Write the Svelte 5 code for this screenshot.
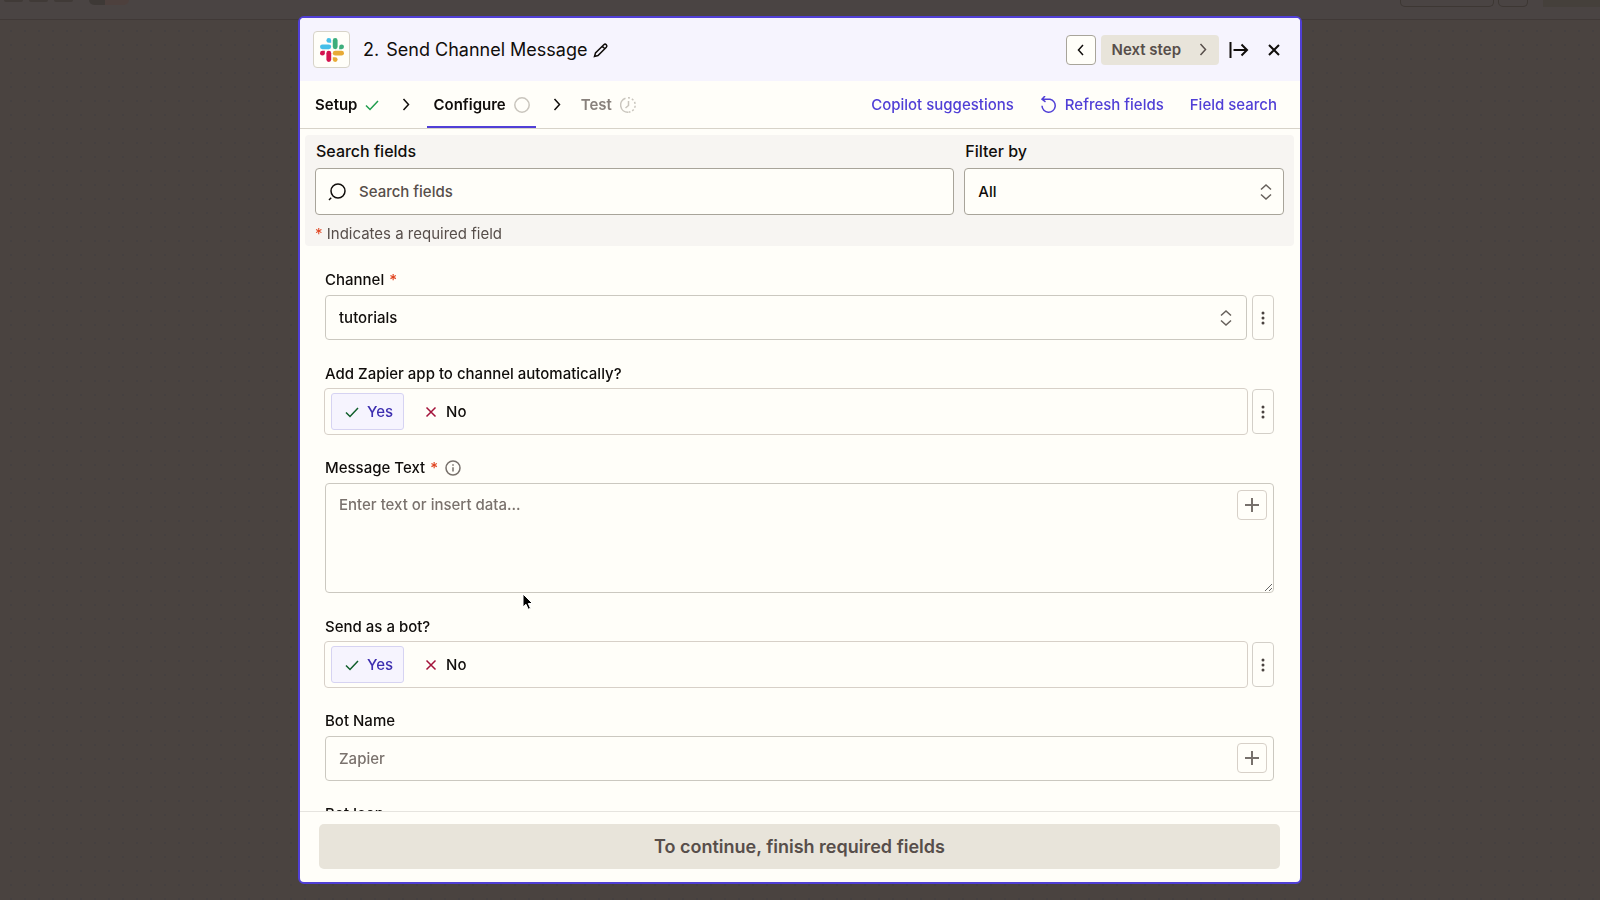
<script lang="ts">
	/**
	 * Step editor dialog: configure a Slack "Send Channel Message" action.
	 */

	let search = $state('');
	let filter = $state('All');
	let channel = $state('tutorials');
	let addApp = $state('yes');
	let message = $state('');
	let asBot = $state('yes');
	let botName = $state('');
	let botIcon = $state('');
</script>

{#snippet chevronRight()}
	<svg class="icon" width="16" height="16" viewBox="0 0 16 16" aria-hidden="true">
		<path d="M5.5 2 10.5 7.5l-5 5.500" />
	</svg>
{/snippet}

{#snippet upDown()}
	<svg class="icon updown" width="16" height="20" viewBox="0 0 16 20" aria-hidden="true">
		<path d="M3 7.5 8 3l5 4.5M3 12.5 8 17l5-4.5" />
	</svg>
{/snippet}

{#snippet plus()}
	<svg class="icon" width="16" height="16" viewBox="0 0 16 16" aria-hidden="true">
		<path d="M8 1v14M1 8h14" stroke-width="2" />
	</svg>
{/snippet}

{#snippet kebab(name: string)}
	<button class="kebab" type="button" aria-label="Options for {name}">
		<svg width="4" height="16" viewBox="0 0 4 16" aria-hidden="true">
			<circle cx="2" cy="3" r="1.5" /><circle cx="2" cy="8" r="1.5" /><circle cx="2" cy="13" r="1.5" />
		</svg>
	</button>
{/snippet}

{#snippet yesNo(name: string, value: string, set: (v: string) => void)}
	<div class="choices">
		<label class="choice" class:selected={value === 'yes'}>
			<input type="radio" {name} checked={value === 'yes'} onchange={() => set('yes')} />
			<svg class="icon yes" width="14" height="14" viewBox="0 0 14 14" aria-hidden="true">
				<path d="m1 7.5 4 4 8-8.5" />
			</svg>
			Yes
		</label>
		<label class="choice" class:selected={value === 'no'}>
			<input type="radio" {name} checked={value === 'no'} onchange={() => set('no')} />
			<svg class="icon no" width="14" height="14" viewBox="0 0 14 14" aria-hidden="true">
				<path d="m2.5 2.5 9 9m0-9-9 9" />
			</svg>
			No
		</label>
	</div>
{/snippet}

<div class="editor">
	<div class="toolbar">
		<div class="tools-left"><span></span><span></span><span></span><i></i></div>
		<div class="tools-right"><span class="wide"></span><span></span><i></i></div>
	</div>
	<div class="canvas"></div>
</div>

<div class="overlay">
	<div class="dialog" role="dialog" aria-labelledby="step-title">
		<header class="head">
			<div class="app-icon">
				<svg width="24" height="24" viewBox="0 0 24 24" aria-hidden="true">
					<g fill="#45bfe8">
						<path d="M8.8 0a2.4 2.4 0 1 0 0 4.8h2.4V2.4A2.4 2.4 0 0 0 8.8 0z" />
						<rect x="0" y="6.4" width="11.2" height="4.8" rx="2.4" />
					</g>
					<g fill="#3dae7c">
						<path d="M24 8.8a2.4 2.4 0 1 0-4.8 0v2.4h2.4A2.4 2.4 0 0 0 24 8.8z" />
						<rect x="12.8" y="0" width="4.8" height="11.2" rx="2.4" />
					</g>
					<g fill="#e8aa35">
						<path d="M15.2 24a2.4 2.4 0 1 0 0-4.8h-2.4v2.4a2.4 2.4 0 0 0 2.4 2.4z" />
						<rect x="12.8" y="12.8" width="11.2" height="4.8" rx="2.4" />
					</g>
					<g fill="#d3134f">
						<path d="M0 15.2a2.4 2.4 0 1 0 4.8 0v-2.4H2.4A2.4 2.4 0 0 0 0 15.2z" />
						<rect x="6.4" y="12.8" width="4.8" height="11.2" rx="2.4" />
					</g>
				</svg>
			</div>
			<h1 id="step-title"><span>2.</span> Send Channel Message</h1>
			<button class="plain" type="button" aria-label="Rename step">
				<svg class="icon" width="16" height="16" viewBox="0 0 16 16" aria-hidden="true">
					<path d="M1.5 14.500 2.500 11 10.800 2.700q1.300-1.200 2.500 0t0 2.500L5 13.500zM9.300 4.200l2.500 2.500" />
				</svg>
			</button>
			<div class="head-actions">
				<button class="back" type="button" aria-label="Previous step">
					<svg class="icon" width="16" height="16" viewBox="0 0 16 16" aria-hidden="true">
						<path d="M10 3 5.5 8l4.5 5" />
					</svg>
				</button>
				<button class="next" type="button">Next step {@render chevronRight()}</button>
				<button class="plain" type="button" aria-label="Collapse panel">
					<svg class="icon heavy" width="20" height="18" viewBox="0 0 20 18" aria-hidden="true">
						<path d="M1.5 1v16M4.5 9H18M12.5 3.5 18 9l-5.5 5.5" />
					</svg>
				</button>
				<button class="plain" type="button" aria-label="Close">
					<svg class="icon heavy" width="12" height="12" viewBox="0 0 12 12" aria-hidden="true">
						<path d="m1 1 10 10M11 1 1 11" />
					</svg>
				</button>
			</div>
		</header>

		<nav class="tabs">
			<button class="tab" type="button">
				Setup
				<svg class="icon done" width="14" height="14" viewBox="0 0 14 14" aria-hidden="true">
					<path d="m1 7.5 4 4 8-8.5" />
				</svg>
			</button>
			{@render chevronRight()}
			<button class="tab active" type="button" aria-current="step">
				Configure
				<svg class="icon pending" width="16" height="16" viewBox="0 0 16 16" aria-hidden="true">
					<circle cx="8" cy="8" r="7.2" />
				</svg>
			</button>
			{@render chevronRight()}
			<button class="tab muted" type="button">
				Test
				<svg class="icon pending" width="16" height="16" viewBox="0 0 16 16" aria-hidden="true">
					<path d="M8 15.200A7.200 7.200 0 0 1 5.500 1.200" />
					<path d="M8 .8a7.200 7.200 0 0 1 0 14.400" stroke-dasharray="2 2" />
					<path d="M8.500 4v4.500L5.500 11" />
				</svg>
			</button>
			<div class="links">
				<button type="button">Copilot suggestions</button>
				<button type="button">
					<svg class="icon" width="18" height="18" viewBox="0 0 18 18" aria-hidden="true">
						<path d="M5 0 2 3.200l3.500 2.600M2.200 3.200H10a6.600 6.600 0 1 1-8 6.600" />
					</svg>
					Refresh fields
				</button>
				<button type="button">Field search</button>
			</div>
		</nav>

		<div class="body">
			<section class="filters">
				<div class="filter-row">
					<div class="filter">
						<label for="search">Search fields</label>
						<div class="stack">
							<input id="search" class="control" type="text" placeholder="Search fields" bind:value={search} />
							<svg class="icon search-icon" width="18" height="18" viewBox="0 0 18 18" aria-hidden="true">
								<circle cx="10" cy="8" r="7" /><path d="M3.200 14.800 1 17" />
							</svg>
						</div>
					</div>
					<div class="filter">
						<label for="filter">Filter by</label>
						<div class="stack">
							<select id="filter" class="control" bind:value={filter}>
								<option>All</option>
							</select>
							{@render upDown()}
						</div>
					</div>
				</div>
				<p><span class="req">*</span> Indicates a required field</p>
			</section>

			<form class="fields">
				<div class="field">
					<label for="channel">Channel <span class="req">*</span></label>
					<div class="row">
						<div class="stack">
							<select id="channel" class="control" bind:value={channel}>
								<option>tutorials</option>
							</select>
							{@render upDown()}
						</div>
						{@render kebab('Channel')}
					</div>
				</div>

				<fieldset class="field">
					<legend>Add Zapier app to channel automatically?</legend>
					<div class="row">
						{@render yesNo('add-app', addApp, (v) => (addApp = v))}
						{@render kebab('Add Zapier app')}
					</div>
				</fieldset>

				<div class="field">
					<label for="message">
						Message Text <span class="req">*</span>
						<svg class="icon info" width="16" height="16" viewBox="0 0 16 16" aria-hidden="true">
							<circle cx="8" cy="8" r="7" /><path d="M8 7.2v4.300M8 4.300v1.500" />
						</svg>
					</label>
					<div class="stack">
						<textarea id="message" class="control" placeholder="Enter text or insert data..." bind:value={message}></textarea>
						<button class="insert" type="button" aria-label="Insert data">{@render plus()}</button>
					</div>
				</div>

				<fieldset class="field">
					<legend>Send as a bot?</legend>
					<div class="row">
						{@render yesNo('as-bot', asBot, (v) => (asBot = v))}
						{@render kebab('Send as a bot')}
					</div>
				</fieldset>

				<div class="field">
					<label for="bot-name">Bot Name</label>
					<div class="stack">
						<input id="bot-name" class="control" type="text" placeholder="Zapier" bind:value={botName} />
						<button class="insert" type="button" aria-label="Insert data">{@render plus()}</button>
					</div>
				</div>

				<div class="field">
					<label for="bot-icon">Bot Icon</label>
					<div class="stack">
						<input id="bot-icon" class="control" type="text" bind:value={botIcon} />
					</div>
				</div>
			</form>
		</div>

		<footer class="foot">
			<button type="button">To continue, finish required fields</button>
		</footer>
	</div>
</div>

<svg class="cursor" width="14" height="20" viewBox="0 0 14 20" aria-hidden="true">
	<path d="M1 1v13l3-2.7 2.2 5 2.3-1-2.2-4.8h4.2z" />
</svg>

<style>
	:global(body) {
		background: #4a4340;
		color: #100d0b;
		font-family: Inter, 'Liberation Sans', sans-serif;
		font-size: 15px;
		font-weight: 500;
		line-height: 24px;
		overflow: hidden;
	}

	button,
	input,
	select,
	textarea {
		font: inherit;
		color: inherit;
		box-sizing: border-box;
		margin: 0;
	}

	button {
		display: flex;
		align-items: center;
		justify-content: center;
		padding: 0;
		border: 0;
		background: none;
		cursor: pointer;
	}

	.icon {
		flex: none;
		fill: none;
		stroke: currentColor;
		stroke-width: 1.5;
	}

	.heavy {
		stroke-width: 2;
	}

	/* Dimmed editor behind the dialog */
	.editor {
		display: flex;
		flex-direction: column;
		height: 100vh;
	}

	.toolbar {
		display: flex;
		justify-content: space-between;
		height: 19px;
		background: #4a4443;
		border-bottom: 1px solid #403937;
	}

	.tools-left,
	.tools-right {
		display: flex;
		align-items: flex-start;
		gap: 6px;
	}

	.tools-left {
		padding-left: 4px;
	}

	.tools-left span {
		width: 19px;
		height: 2px;
		border-radius: 0 0 6px 6px;
		background: #403a37;
	}

	.tools-left i {
		width: 40px;
		height: 5px;
		margin-left: 10px;
		border-radius: 0 0 16px 16px;
		background: linear-gradient(90deg, #3e3936 40%, #4d403d 40%);
	}

	.tools-right {
		gap: 4px;
	}

	.tools-right span {
		box-sizing: border-box;
		width: 30px;
		height: 7px;
		border: 1px solid #3d3733;
		border-top: 0;
		border-radius: 0 0 5px 5px;
	}

	.tools-right .wide {
		width: 94px;
	}

	.tools-right i {
		width: 57px;
		height: 7px;
		margin-left: 11px;
		background: #45403b;
	}

	.canvas {
		flex: 1;
		background: radial-gradient(circle, #454040 1px, transparent 1px) 4px 4px / 14px 14px;
	}

	.overlay {
		position: fixed;
		inset: 0;
		display: flex;
		justify-content: center;
		padding: 16px 0;
	}

	.dialog {
		box-sizing: border-box;
		display: flex;
		flex-direction: column;
		width: 100%;
		max-width: 1004px;
		border: 2px solid #503fd6;
		border-radius: 6px;
		background: #fffef9;
		overflow: hidden;
	}

	/* Header */
	.head {
		display: flex;
		align-items: center;
		gap: 6px;
		padding: 13px 11px 13px 13px;
		background: #f6f4fe;
	}

	.app-icon {
		display: grid;
		place-items: center;
		width: 35px;
		height: 35px;
		margin-right: 7px;
		border: 1px solid #d7d3c9;
		border-radius: 4px;
		background: #fffef9;
	}

	h1 {
		margin: 0;
		font-size: 18px;
		font-weight: 400;
	}

	h1 span {
		margin-right: 2px;
	}

	.head-actions {
		display: flex;
		align-items: center;
		gap: 5px;
		margin-left: auto;
	}

	.back,
	.next {
		height: 30px;
		border-radius: 4px;
	}

	.back {
		width: 30px;
		border: 1px solid #a8a49a;
		background: #fffef9;
	}

	.next {
		gap: 14px;
		padding: 0 8px 0 11px;
		background: #e8e4da;
		color: #574e4a;
		font-weight: 600;
	}

	.head-actions .plain {
		width: 30px;
		height: 30px;
	}

	/* Step tabs */
	.tabs {
		display: flex;
		align-items: center;
		gap: 13px;
		height: 47px;
		padding: 0 23px 0 9px;
		border-bottom: 1px solid #d7d3c9;
	}

	.tab {
		gap: 8px;
		height: 47px;
		padding: 0 6px;
		border-top: 2px solid transparent;
		border-bottom: 2px solid transparent;
		font-weight: 600;
	}

	.active {
		border-bottom-color: #503fd6;
	}

	.muted {
		padding: 0 3px;
		color: #88817c;
	}

	.done {
		color: #1f9d4d;
	}

	.pending {
		color: #c9c5bd;
	}

	.links {
		display: flex;
		gap: 26px;
		margin-left: auto;
		color: #503fd6;
	}

	.links button {
		gap: 7px;
	}

	.body {
		flex: 1;
		min-height: 0;
		overflow: hidden;
		padding: 6px 6px 0 5px;
	}

	.filters {
		padding: 4px 10px 0;
		border-radius: 4px;
		background: #f7f5f2;
	}

	.filter-row {
		display: grid;
		grid-template-columns: 2fr 1fr;
		gap: 10px;
	}

	.filter {
		display: flex;
		flex-direction: column;
		gap: 5px;
	}

	.filter label {
		padding-left: 1px;
		font-size: 16px;
	}

	.filter .control {
		height: 47px;
		border-color: #a8a49a;
	}

	.filter input.control {
		padding-left: 43px;
	}

	.filters p {
		margin: 7px 0 0;
		color: #574e4a;
		font-weight: 400;
	}

	.req {
		color: #e0401c;
	}

	.fields {
		display: flex;
		flex-direction: column;
		gap: 21px;
		padding: 22px 20px;
	}

	.field {
		display: flex;
		flex-direction: column;
		gap: 3px;
		min-width: 0;
		margin: 0;
		padding: 0;
		border: 0;
	}

	.field > label {
		display: flex;
		align-items: center;
		gap: 5px;
	}

	legend {
		padding: 1px 0 2px;
	}

	.info {
		margin-left: 2px;
		color: #77706b;
	}

	.row {
		display: flex;
		align-items: center;
		gap: 5px;
	}

	/* Control with an icon or button laid over its edge */
	.stack {
		display: grid;
		flex: 1;
		align-items: center;
	}

	.stack > * {
		grid-area: 1 / 1;
	}

	.control {
		width: 100%;
		height: 45px;
		padding: 0 13px;
		border: 1px solid #cbc8c0;
		border-radius: 4px;
		background: #fffef9;
		appearance: none;
	}

	.control::placeholder {
		color: #7a726d;
		opacity: 1;
	}

	#search::placeholder {
		color: #574e4a;
	}

	textarea.control {
		display: block;
		height: 110px;
		padding: 9px 13px;
		resize: vertical;
	}

	.updown {
		justify-self: end;
		margin-right: 13px;
		color: #66605b;
		pointer-events: none;
	}

	.filter .updown {
		margin-right: 10px;
	}

	.search-icon {
		margin-left: 13px;
		pointer-events: none;
	}

	.insert {
		align-self: start;
		justify-self: end;
		width: 30px;
		height: 30px;
		margin: 7px 7px 0 0;
		border: 1px solid #d7d0c8;
		border-radius: 4px;
		color: #77716c;
	}

	.kebab {
		width: 22px;
		height: 45px;
		border: 1px solid #d3cfc8;
		border-radius: 4px;
		color: #4a4340;
	}

	.kebab svg {
		fill: currentColor;
	}

	.choices {
		box-sizing: border-box;
		display: flex;
		flex: 1;
		gap: 6px;
		height: 47px;
		margin: 0 -1px;
		padding: 4px 6px;
		border: 1px solid #d7d0c8;
		border-radius: 4px;
	}

	.choice {
		display: flex;
		align-items: center;
		gap: 8px;
		padding: 0 10px 0 13px;
		border: 1px solid transparent;
		border-radius: 3px;
		cursor: pointer;
	}

	.choice input {
		position: absolute;
		opacity: 0;
		pointer-events: none;
	}

	.selected {
		border-color: #d6d3f2;
		background: #f6f4fe;
		color: #3d2eb0;
	}

	.yes {
		color: #0f5e2a;
	}

	.no {
		color: #a3123a;
	}

	.foot {
		padding: 12px 20px 13px 19px;
		border-top: 1px solid #e6e4df;
	}

	.foot button {
		width: 100%;
		height: 45px;
		border-radius: 5px;
		background: #e8e4da;
		color: #574e4a;
		font-size: 18px;
		font-weight: 600;
	}

	.cursor {
		position: fixed;
		left: 522px;
		top: 593px;
		fill: #000;
		stroke: #fff;
		pointer-events: none;
	}
</style>
